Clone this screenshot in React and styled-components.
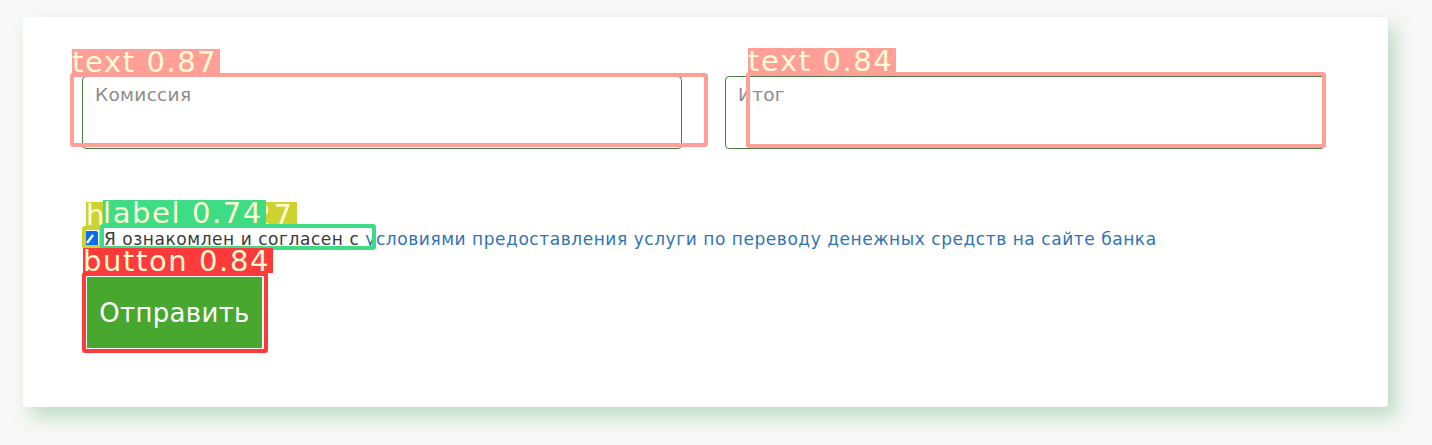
import React from 'react';
import styled, { createGlobalStyle } from 'styled-components';

const GlobalStyle = createGlobalStyle`
  body {
    margin: 0;
    background: #f7f8f7;
    font-family: "DejaVu Sans", sans-serif;
  }
`;

const Page = styled.div`
  position: relative;
  width: 1432px;
  height: 445px;
  padding: 17px 0 0 23px;
  box-sizing: border-box;
`;

const Card = styled.form`
  width: 1365px;
  height: 390px;
  box-sizing: border-box;
  padding: 59px 0 0 59px;
  background: #fff;
  border-radius: 4px;
  box-shadow: 8px 10px 18px rgba(90, 170, 110, 0.35);
`;

const Fields = styled.div`
  display: flex;
  gap: 43px;
`;

const Field = styled.textarea`
  width: 600px;
  height: 73px;
  box-sizing: border-box;
  padding: 7px 12px;
  border: 1px solid #4d7a45;
  border-radius: 4px;
  font-family: "DejaVu Sans", sans-serif;
  font-size: 18.5px;
  letter-spacing: 0.3px;
  resize: none;
  outline: none;

  &::placeholder {
    color: #8c8c8c;
  }
`;

const Agree = styled.label`
  display: flex;
  align-items: center;
  gap: 6px;
  margin-top: 80px;
  font-family: "DejaVu Sans", sans-serif;
  font-size: 17px;
  letter-spacing: 0.55px;
  color: #3a3a3a;
`;

const Check = styled.span`
  width: 16px;
  height: 16px;
  border-radius: 2px;
  background: #0a6ee8;
  display: inline-flex;
  align-items: center;
  justify-content: center;
`;

const TermsLink = styled.a`
  color: #3173b4;
  text-decoration: none;
`;

const Submit = styled.button`
  margin-top: 28px;
  margin-left: 5px;
  width: 175px;
  height: 71px;
  border: none;
  background: #47a72f;
  color: #fff;
  font-family: "DejaVu Sans", sans-serif;
  font-size: 26px;
  letter-spacing: 0.3px;
`;

const Annot = styled.div`
  position: absolute;
  left: ${p => p.x}px;
  top: ${p => p.y}px;
  width: ${p => p.w}px;
  height: ${p => p.h}px;
  box-sizing: border-box;
  border: 4px solid ${p => p.color};
  border-radius: 3px;
  pointer-events: none;
`;

const AnnotLabel = styled.div`
  position: absolute;
  left: ${p => p.x}px;
  top: ${p => p.y}px;
  height: 25px;
  padding-right: 3px;
  background: ${p => p.color};
  color: #fffbd2;
  font-family: "DejaVu Sans", sans-serif;
  font-size: 29px;
  line-height: 26px;
  letter-spacing: ${p => p.ls}px;
  white-space: nowrap;
  pointer-events: none;
`;

const boxes = [
  { x: 70, y: 73, w: 638, h: 74, color: '#ff9f98', lx: 72, ls: 1.6, label: 'text 0.87' },
  { x: 746, y: 72, w: 580, h: 76, color: '#ff9f98', lx: 748, ls: 1.6, label: 'text 0.84' },
  { x: 82, y: 226, w: 21, h: 23, color: '#cdd230', lx: 86, ls: 2.3, label: 'hlabel 0.727' },
  { x: 100, y: 224, w: 276, h: 26, color: '#3ddc85', lx: 103, ls: 1.6, label: 'label 0.74' },
  { x: 82, y: 272, w: 186, h: 81, color: '#ff3a3a', lx: 83, ls: 1.6, label: 'button 0.84' },
];

export default function App() {
  return (
    <>
      <GlobalStyle />
      <Page>
        <Card>
          <Fields>
            <Field placeholder="Комиссия" />
            <Field placeholder="Итог" />
          </Fields>
          <Agree>
            <Check>
              <svg width="10" height="12" viewBox="0 0 10 12">
                <path d="M2 10 L8 2" stroke="#fff" strokeWidth="2.4" />
              </svg>
            </Check>
            <span>
              Я ознакомлен и согласен с{' '}
              <TermsLink href="#">
                условиями предоставления услуги по переводу денежных средств на сайте банка
              </TermsLink>
            </span>
          </Agree>
          <Submit type="button">Отправить</Submit>
        </Card>
        {boxes.map(b => (
          <React.Fragment key={b.label}>
            <Annot x={b.x} y={b.y} w={b.w} h={b.h} color={b.color} />
            <AnnotLabel x={b.lx} y={b.y - 24} ls={b.ls} color={b.color}>
              {b.label}
            </AnnotLabel>
          </React.Fragment>
        ))}
      </Page>
    </>
  );
}
